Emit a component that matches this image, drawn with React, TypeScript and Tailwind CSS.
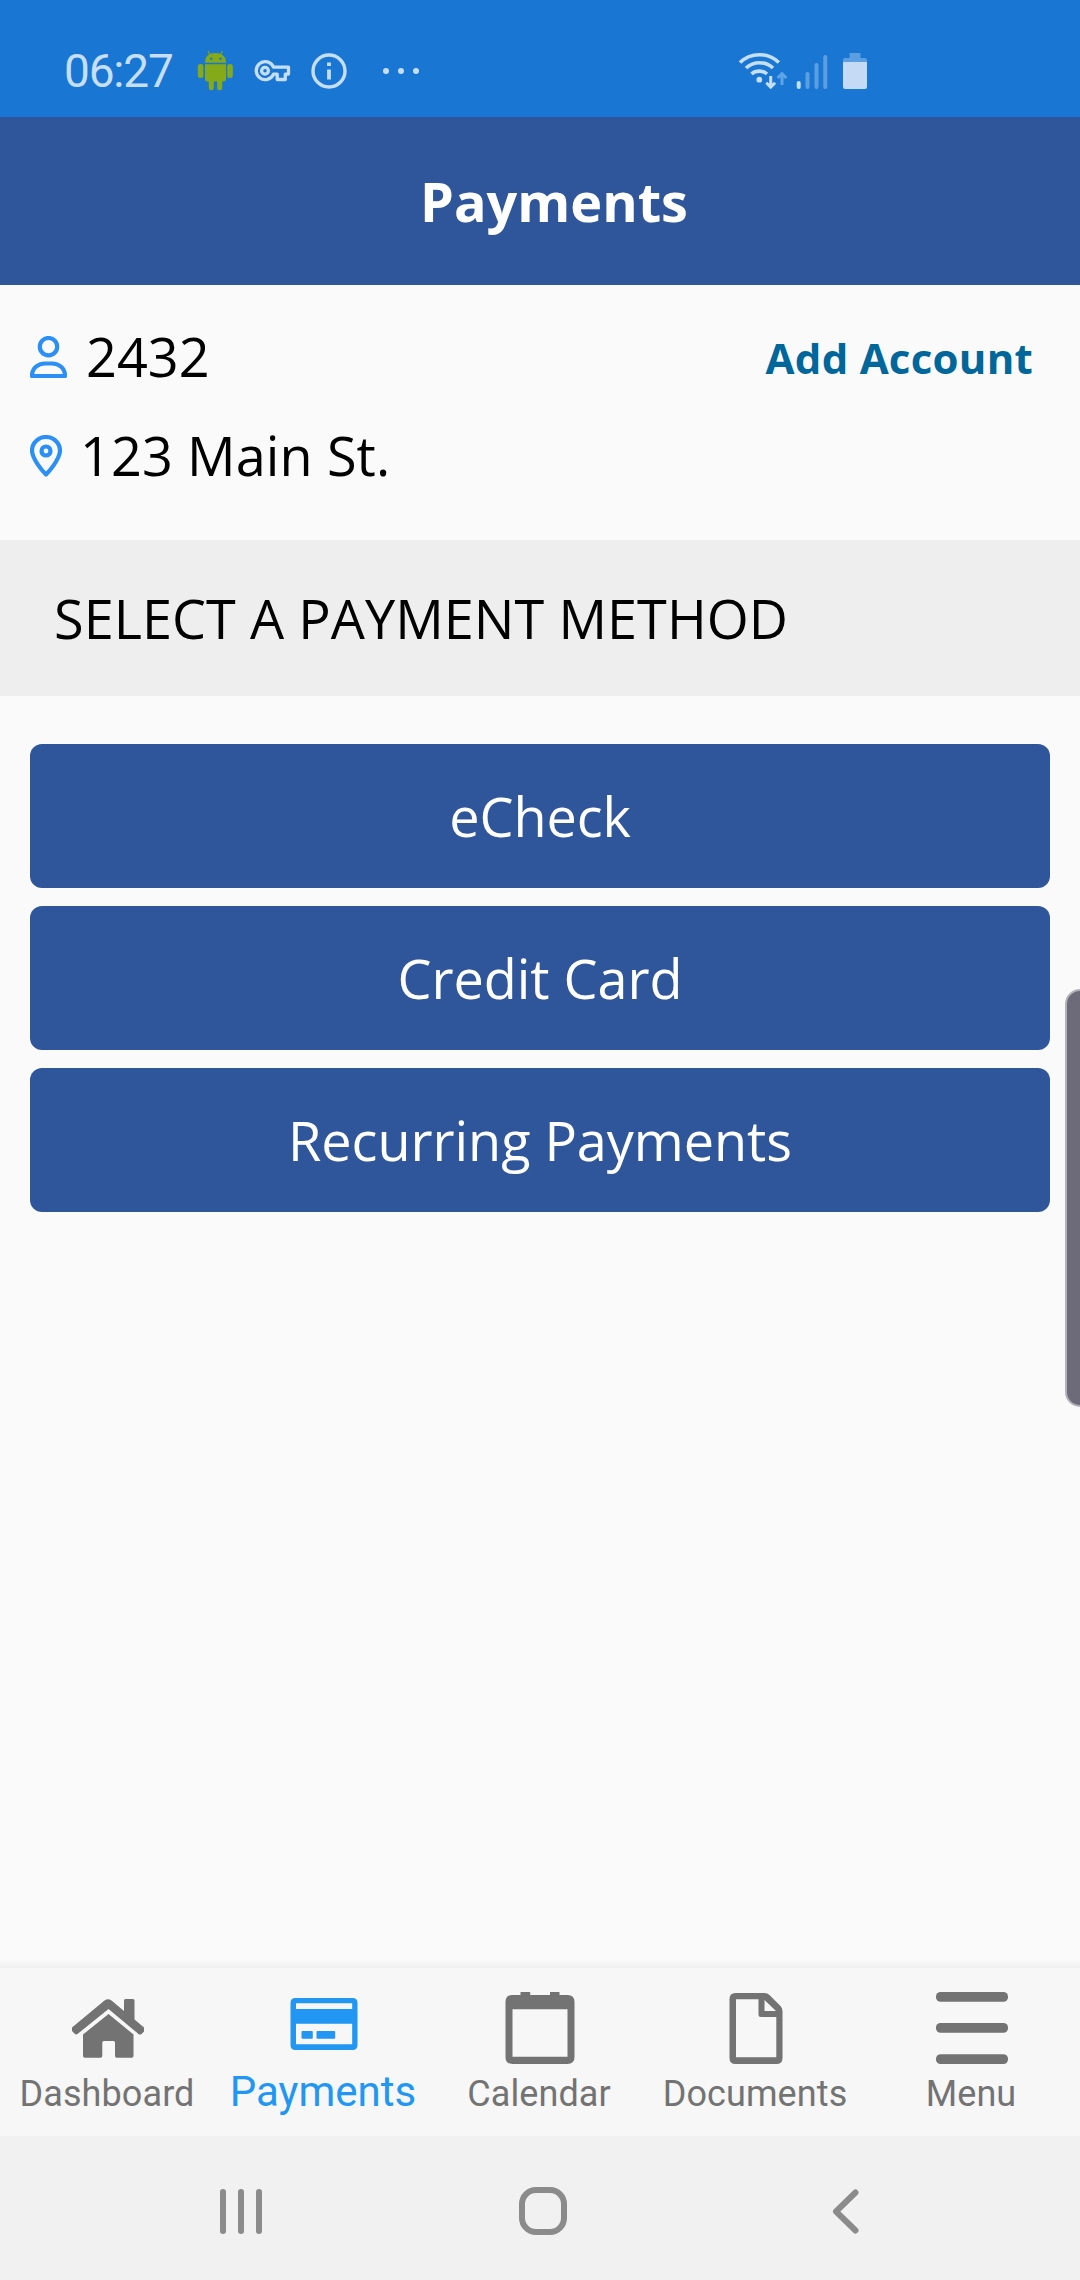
import { useState } from "react";

const METHODS = ["eCheck", "Credit Card", "Recurring Payments"];

function AndroidIcon() {
    return (
        <svg width="36" height="42" viewBox="197 51 36 42" fill="#84aa19">
            <path d="M205 63.700C205 57 209 54 215.300 54S226 57 226 63.700Z" />
            <path d="M208 52l2 3.500M222.500 52l-2 3.500" stroke="#84aa19" strokeWidth="1.100" />
            <circle cx="211.200" cy="59.700" r="1.200" fill="#1976d2" />
            <circle cx="220.500" cy="59.700" r="1.200" fill="#1976d2" />
            <rect x="197.800" y="65" width="5.600" height="14" rx="2.500" />
            <rect x="227.200" y="65" width="5.600" height="14" rx="2.500" />
            <path d="M205 65.300h21V80a2.500 2.500 0 0 1-2.500 2.500h-1.300v6.300a2.500 2.500 0 0 1-5 0v-6.300h-3.400v6.300a2.500 2.500 0 0 1-5 0v-6.300h-1.300A2.500 2.500 0 0 1 205 80Z" />
        </svg>
    );
}

function KeyIcon() {
    return (
        <svg width="38" height="24" viewBox="254 60 38 24" fill="none" stroke="#c5dffa" strokeWidth="3.300">
            <path d="M273.500 68.100h15v7h-3.200v5.400h-8.100v-5.400h-3.700a9 9 0 1 1 0-7Z" strokeLinejoin="round" />
            <circle cx="265" cy="71.700" r="3.400" />
        </svg>
    );
}

function InfoIcon() {
    return (
        <svg width="36" height="36" viewBox="0 0 36 36" fill="none" stroke="#c5dffa">
            <circle cx="18" cy="18" r="16" strokeWidth="3.400" />
            <path d="M18 16.500v10M18 9.500v3.500" strokeWidth="3.800" />
        </svg>
    );
}

function StatusRight() {
    return (
        <svg width="130" height="38" viewBox="738 51 130 38" fill="none">
            {/* wifi */}
            <g stroke="#c5dffa" strokeWidth="3.600">
                <path d="M740 61.500a28 28 0 0 1 38.800 0" />
                <path d="M746 67a20 20 0 0 1 27 0" />
                <path d="M751.500 73a12 12 0 0 1 15.500 0" />
            </g>
            <circle cx="759.300" cy="78.700" r="2.900" fill="#c5dffa" />
            <path d="M770.700 75v11M766.300 81.800l4.400 4.400 4.400-4.400" stroke="#c5dffa" strokeWidth="3" />
            <path d="M782 84V73M777.600 77l4.400-4.400 4.400 4.400" stroke="#5fa4e6" strokeWidth="3" />
            {/* signal */}
            <g strokeWidth="4" strokeLinecap="round">
                <path d="M798.700 82v4" stroke="#c5dffa" />
                <path d="M807.500 73v13M816.500 64v22M825.300 56v30" stroke="#5b9fe2" />
            </g>
            {/* battery */}
            <path d="M849.500 52h11v5h4.500a2 2 0 0 1 2 2v3h-24v-3a2 2 0 0 1 2-2h4.500Z" fill="#5b9fe2" />
            <path d="M843 61h24v25a2 2 0 0 1-2 2h-20a2 2 0 0 1-2-2Z" fill="#c5dbf5" />
        </svg>
    );
}

function HomeIcon() {
    return (
        <svg width="72" height="72" viewBox="72 1992 72 72" fill="currentColor">
            <path d="M72 2029V2027.500L104.500 2000.500Q108 1998 111.500 2000.500L124 2011V2000.500Q124 1999 125.500 1999H133Q134.500 1999 134.500 2000.500V2019.500L144 2027.500V2031.500L141.500 2034Q140 2035 138.500 2034L108.500 2009L77.500 2034Q76 2035 74.500 2033.500L72 2031Z" />
            <path d="M83 2034.500L108.500 2014L133.500 2034.500V2056Q133.500 2057.700 131.800 2057.700H116.700Q115 2057.700 115 2056V2042.500Q115 2041 113.500 2041H104Q102.300 2041 102.300 2042.500V2056Q102.300 2057.700 100.600 2057.700H85Q83 2057.700 83 2056Z" />
        </svg>
    );
}

function CardIcon() {
    return (
        <svg width="72" height="72" viewBox="288.500 1992 72 72" fill="currentColor">
            <path fillRule="evenodd" d="M296 1998H353Q358 1998 358 2003V2045Q358 2050 353 2050H296Q291 2050 291 2045V2003Q291 1998 296 1998ZM296.500 2003.300V2009H352.700V2003.300ZM296.500 2023.700V2044.300H352.700V2023.700Z" />
            <rect x="302" y="2031" width="11.300" height="7.800" rx="1" />
            <rect x="317" y="2031" width="18.700" height="7.800" rx="1" />
        </svg>
    );
}

function CalendarIcon() {
    return (
        <svg width="72" height="72" viewBox="504.500 1992 72 72" fill="currentColor">
            <path fillRule="evenodd" d="M521 1992H530.700V1995H550.500V1992H560V1995H568Q575 1995 575 2002V2057Q575 2064 568 2064H513Q506 2064 506 2057V2002Q506 1995 513 1995H521ZM513 2009.300V2056.700H568V2009.300Z" />
        </svg>
    );
}

function DocumentIcon() {
    return (
        <svg width="72" height="72" viewBox="719.500 1992 72 72" fill="currentColor">
            <path fillRule="evenodd" d="M735 1993H764Q767 1993 769 1995L780 2006Q782 2008 782 2011V2058Q782 2064 776 2064H735Q729 2064 729 2058V1999Q729 1993 735 1993ZM735.500 1999.200V2057.300H775.800V2017H760.500Q758 2017 758 2014.500V1999.200ZM764 2000V2011H775.500Z" />
        </svg>
    );
}

function MenuIcon() {
    return (
        <svg width="72" height="72" viewBox="0 0 72 72" fill="currentColor">
            <rect y="0" width="72" height="9.700" rx="4.500" />
            <rect y="31" width="72" height="9.700" rx="4.500" />
            <rect y="62.300" width="72" height="9.700" rx="4.500" />
        </svg>
    );
}

const TABS = [
    { name: "Dashboard", Icon: HomeIcon },
    { name: "Payments", Icon: CardIcon },
    { name: "Calendar", Icon: CalendarIcon },
    { name: "Documents", Icon: DocumentIcon },
    { name: "Menu", Icon: MenuIcon },
];

function App() {
    const [tab, setTab] = useState("Payments");

    return (
        <div className="relative flex h-[2280px] w-[1080px] flex-col overflow-hidden bg-[#fafafa] font-['Open_Sans',sans-serif] text-black">

            {/* Status bar */}
            <div className="flex h-[117px] items-center justify-between bg-[#1976d2] pt-[25px] pr-[212px] pl-[64px]">
                <div className="flex items-center">
                    <span className="w-[133px] font-['Roboto',sans-serif] text-[46px] leading-none tracking-[-1.2px] text-[#c5dffa]">06:27</span>
                    <AndroidIcon />
                    <div className="ml-[21px]"><KeyIcon /></div>
                    <div className="ml-[19px]"><InfoIcon /></div>
                    <div className="ml-[36px] flex gap-[9px]">
                        <span className="size-1.5 rounded-full bg-[#c5dffa]" />
                        <span className="size-1.5 rounded-full bg-[#c5dffa]" />
                        <span className="size-1.5 rounded-full bg-[#c5dffa]" />
                    </div>
                </div>
                <StatusRight />
            </div>

            {/* Header */}
            <header className="flex h-[168px] items-center justify-center bg-[#2f569a] pl-[28px]">
                <h1 className="text-[54px] font-bold text-white">Payments</h1>
            </header>

            {/* Account */}
            <section className="flex h-[255px] flex-col pt-[22px] pr-[47px] pl-[30px]">
                <div className="flex h-[99px] items-center">
                    <svg width="37" height="42" viewBox="0 0 37 42" fill="none" stroke="#2b8ff5" strokeWidth="4.200">
                        <circle cx="18.500" cy="10.700" r="8.700" />
                        <path d="M2 40C2 32 8 27.500 15 27.500H22C29 27.500 35 32 35 40Z" strokeLinejoin="round" />
                    </svg>
                    <span className="ml-[19px] text-[54px]">2432</span>
                    <button className="ml-auto pt-0.5 text-[42px] font-bold tracking-[0.25px] text-[#01669a]">Add Account</button>
                </div>
                <div className="flex h-[99px] items-center">
                    <svg width="32" height="42" viewBox="0 0 32 42" fill="none" stroke="#2b8ff5" strokeWidth="4.200">
                        <path d="M16 39.500C13 36.500 2 24 2 15.500a14 13.500 0 0 1 28 0C30 24 19 36.500 16 39.500Z" strokeLinejoin="round" />
                        <circle cx="16" cy="16" r="4.500" />
                    </svg>
                    <span className="ml-[18px] text-[54px] tracking-[0.1px]">123 Main St.</span>
                </div>
            </section>

            <h2 className="flex h-[156px] items-center bg-[#eeeeee] pl-[54px] text-[54px] tracking-[0.05px]">SELECT A PAYMENT METHOD</h2>

            {/* Payment methods */}
            <main className="flex flex-1 flex-col gap-[18px] px-[30px] pt-12">
                {METHODS.map((method) => (
                    <button key={method} className="h-36 rounded-xl bg-[#2f569a] text-[54px] tracking-[-0.05px] text-white">
                        {method}
                    </button>
                ))}
            </main>

            {/* Bottom tabs */}
            <div className="h-2 bg-linear-to-b from-[#fafafa] to-[#efefef]" />
            <nav className="grid h-[168px] grid-cols-5 bg-[#f7f7f7] font-['Roboto',sans-serif]">
                {TABS.map(({ name, Icon }) => (
                    <button
                        key={name}
                        onClick={() => setTab(name)}
                        className={`flex flex-col items-center pt-6 ${tab === name ? "text-[#2196f3]" : "text-[#737373]"}`}
                    >
                        <Icon />
                        <span className={`flex items-center whitespace-nowrap pr-0.5 ${tab === name ? "h-[55px] text-[42px]" : "h-[60px] text-[36px] tracking-[0.1px]"}`}>
                            {name}
                        </span>
                    </button>
                ))}
            </nav>

            {/* System navigation */}
            <div className="flex h-36 items-center justify-between bg-[#f1f1f1] pt-[6px] pr-[221px] pl-[220px]">
                <div className="flex gap-3">
                    <span className="h-[45px] w-1.5 rounded-full bg-[#8b8b8b]" />
                    <span className="h-[45px] w-1.5 rounded-full bg-[#8b8b8b]" />
                    <span className="h-[45px] w-1.5 rounded-full bg-[#8b8b8b]" />
                </div>
                <span className="mr-[9px] size-12 rounded-[17px] border-[6px] border-[#8b8b8b]" />
                <svg width="27" height="45" viewBox="0 0 27 45" fill="none" stroke="#8b8b8b" strokeWidth="6" strokeLinecap="round" strokeLinejoin="round">
                    <path d="M23.500 3.500L4 22.500L23.500 41.500" />
                </svg>
            </div>

            {/* Edge panel handle */}
            <div className="absolute top-[989px] right-[-15px] h-[418px] w-[30px] rounded-[18px] border-2 border-[#b3b2b8] bg-[#6d6b79]" />
        </div>
    );
}

export default App;
